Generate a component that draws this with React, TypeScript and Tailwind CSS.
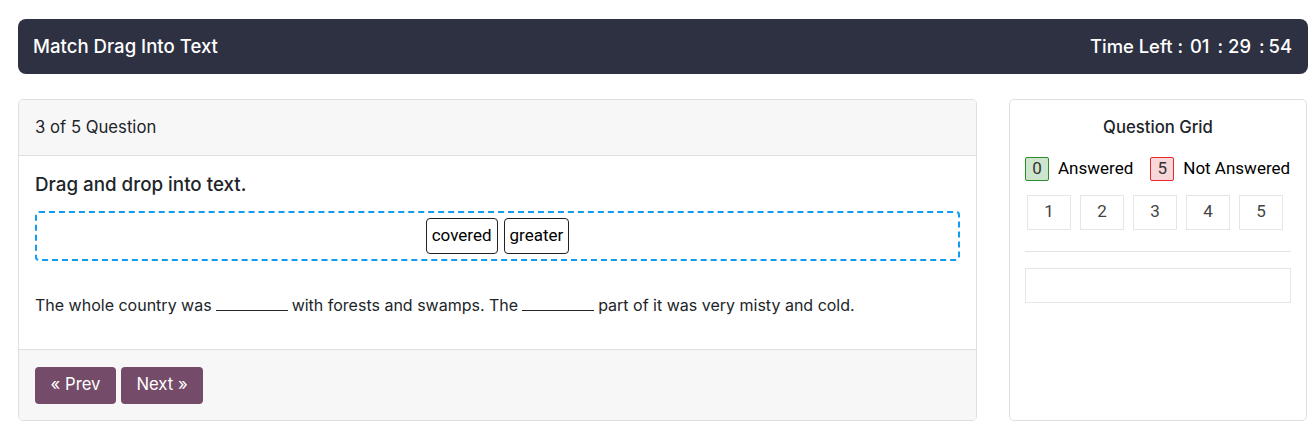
import React from "react";

const inter = { fontFamily: "Inter, 'Noto Sans', sans-serif" };
const roboto = { fontFamily: "Roboto, 'Liberation Sans', sans-serif" };

function Blank() {
  return <span className="inline-block w-[72px] border-b border-[#212529] mx-[4px] align-baseline" />;
}

export default function App() {
  return (
    <div className="bg-white w-[1312px] h-[437px] overflow-hidden" style={inter}>
      <div className="ml-[18px] w-[1290px] pt-[19px]">
        <div className="h-[55px] rounded-[8px] bg-[#2e3142] flex items-center justify-between pl-[15px] pr-[16px] text-white">
          <div className="text-[18.6px] font-medium">Match Drag Into Text</div>
          <div className="text-[18.4px] font-medium flex items-center">
            <span>Time Left :</span>
            <span className="ml-[7px]">01</span>
            <span className="ml-[8px]">:</span>
            <span className="ml-[5px]">29</span>
            <span className="ml-[8px]">:</span>
            <span className="ml-[4px]">54</span>
          </div>
        </div>

        <div className="mt-[25px] flex gap-[32px]">
          <div className="w-[959px] h-[322px] border border-[#dfdfdf] rounded-[5px] flex flex-col overflow-hidden">
            <div className="h-[56px] bg-[#f7f7f7] border-b border-[#dfdfdf] flex items-center px-[16px] text-[16.7px] text-[#212529]">
              3 of 5 Question
            </div>
            <div className="flex-1 px-[16px] pt-[15px] text-[#212529]">
              <div className="text-[18.8px] leading-[27px] font-medium">Drag and drop into text.</div>
              <div className="mt-[13px] h-[50px] border-2 border-dashed border-[#109cf0] rounded-[4px] flex items-center justify-center gap-[6px]" style={roboto}>
                <span className="h-[36px] px-[5px] border border-[#222] rounded-[4px] flex items-center text-[17px] text-black">covered</span>
                <span className="h-[36px] px-[5px] border border-[#222] rounded-[4px] flex items-center text-[17px] text-black">greater</span>
              </div>
              <div className="mt-[32px] text-[16px] leading-[24px]">
                The whole country was<Blank />with forests and swamps. The<Blank />part of it was very misty and cold.
              </div>
            </div>
            <div className="h-[71px] bg-[#f7f7f7] border-t border-[#dfdfdf] flex items-center px-[16px] gap-[5px]">
              <button className="h-[37px] w-[81px] rounded-[4px] bg-[#744c6a] text-white text-[16.7px]">« Prev</button>
              <button className="h-[37px] w-[82px] rounded-[4px] bg-[#744c6a] text-white text-[16.7px]">Next »</button>
            </div>
          </div>

          <div className="w-[298px] h-[322px] border border-[#dfdfdf] rounded-[5px] px-[15px]">
            <div className="text-center text-[16.7px] font-medium text-[#212529] mt-[15px] leading-[24px]">Question Grid</div>
            <div className="mt-[17px] flex items-center text-[17px] text-black" style={roboto}>
              <span className="w-[24px] h-[24px] border border-[#2e8b2e] bg-[#cde5cd] rounded-[2px] flex items-center justify-center text-[#333]">0</span>
              <span className="ml-[9px]">Answered</span>
              <span className="ml-[17px] w-[24px] h-[24px] border border-[#e8262b] bg-[#f8d7da] rounded-[2px] flex items-center justify-center text-[#333]">5</span>
              <span className="ml-[9px]">Not Answered</span>
            </div>
            <div className="mt-[13px] ml-[2px] flex gap-[9px]" style={roboto}>
              {[1, 2, 3, 4, 5].map((n) => (
                <div key={n} className="w-[44px] h-[35px] border border-[#e6e6e6] flex items-center justify-center text-[17px] text-[#444]">
                  {n}
                </div>
              ))}
            </div>
            <div className="mt-[21px] border-t border-[#e3e3e3]" />
            <div className="mt-[16px] h-[35px] border border-[#e6e6e6]" />
          </div>
        </div>
      </div>
    </div>
  );
}
